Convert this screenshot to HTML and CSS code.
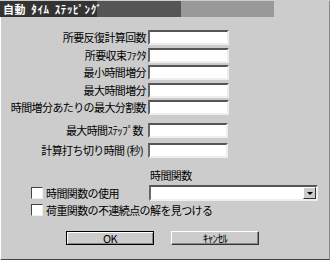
FILE: index.html
```html
<!DOCTYPE html>
<html>
<head>
    <title>自動 ﾀｲﾑ ｽﾃｯﾋﾟﾝｸﾞ</title>
    <link rel="stylesheet" href="styles.css">
</head>
<body>
<div class="window">
    <div class="titlebar"><span class="title">自動 ﾀｲﾑ ｽﾃｯﾋﾟﾝｸﾞ</span></div>

    <div class="fields">
        <label>所要反復計算回数</label><div class="edit"></div>
        <label>所要収束ﾌｧｸﾀ</label><div class="edit"></div>
        <label>最小時間増分</label><div class="edit"></div>
        <label>最大時間増分</label><div class="edit"></div>
        <label>時間増分あたりの最大分割数</label><div class="edit"></div>
    </div>

    <div class="fields fields-lower">
        <label>最大時間ｽﾃｯﾌﾟ数</label><div class="edit"></div>
        <label>計算打ち切り時間 (秒)</label><div class="edit"></div>
    </div>

    <div class="func-head">時間関数</div>
    <div class="func-row">
        <div class="check"><span class="box"></span><span>時間関数の使用</span></div>
        <div class="combo"><span class="drop"><span class="arrow"></span></span></div>
    </div>
    <div class="check check-wide"><span class="box"></span><span>荷重関数の不連続点の解を見つける</span></div>

    <div class="buttons">
        <div class="button default">OK</div>
        <div class="button">ｷｬﾝｾﾙ</div>
    </div>
</div>
</body>
</html>
```

FILE: styles.css
```css
html, body {
    margin:0;
    padding:0;
    background:#cccccc;
    overflow:hidden;
}

.window {
    box-sizing:border-box;
    width:330px;
    height:260px;
    background:#cccccc;
    border-left:1px solid #ffffff;
    border-right:1px solid #888888;
    border-bottom:2px solid #444444;
    font-family: "Noto Sans CJK JP", "Liberation Sans", sans-serif;
    font-size:11px;
    letter-spacing:-0.6px;
    color:#000000;
}

.titlebar {
    margin-top:1px;
    margin-left:-1px;
    width:274px;
    height:16px;
    background:linear-gradient(to right, #333333 0, #333333 97px, #555555 97px, #555555 181px, #999999 181px);
    display:flex;
    align-items:center;
}

.title {
    padding-left:3px;
    color:#ffffff;
    font-weight:bold;
    font-size:11px;
    letter-spacing:0.6px;
    word-spacing:2px;
    line-height:16px;
    white-space:pre;
}

.fields {
    display:grid;
    grid-template-columns:145px 81px;
    grid-auto-rows:15px;
    column-gap:2px;
    row-gap:2.5px;
    margin-top:13px;
}

.fields label {
    text-align:right;
    line-height:15px;
    white-space:nowrap;
}

.fields-lower {
    grid-template-columns:142px 80px;
    column-gap:5px;
    row-gap:5px;
    margin-top:8px;
}

.edit {
    box-sizing:border-box;
    background:#ffffff;
    border-top:2px solid #555555;
    border-left:2px solid #666666;
    border-right:2px solid #eeeeee;
    border-bottom:2px solid #eeeeee;
}

.func-head {
    margin-top:11px;
    padding-left:149px;
    height:14px;
    line-height:12px;
}

.func-row {
    display:flex;
    align-items:center;
    margin-top:2px;
    height:16px;
}

.check {
    display:flex;
    align-items:center;
    gap:3px;
    padding-left:30px;
    width:118px;
    white-space:nowrap;
}

.check-wide {
    width:auto;
    margin-top:2px;
    height:14px;
}

.box {
    box-sizing:border-box;
    width:12px;
    height:12px;
    background:#ffffff;
    border-top:1px solid #444444;
    border-left:1px solid #444444;
    border-right:1px solid #eeeeee;
    border-bottom:1px solid #eeeeee;
}

.combo {
    box-sizing:border-box;
    width:169px;
    height:16px;
    background:#ffffff;
    border-top:2px solid #555555;
    border-left:2px solid #666666;
    border-right:2px solid #eeeeee;
    border-bottom:2px solid #eeeeee;
    display:flex;
    justify-content:flex-end;
}

.drop {
    box-sizing:border-box;
    width:13px;
    height:12px;
    background:#cccccc;
    border-top:1px solid #ffffff;
    border-left:1px solid #ffffff;
    border-right:1px solid #333333;
    border-bottom:1px solid #333333;
    display:flex;
    align-items:center;
    justify-content:center;
}

.arrow {
    width:0;
    height:0;
    border-left:3px solid transparent;
    border-right:3px solid transparent;
    border-top:3px solid #000000;
}

.buttons {
    display:flex;
    gap:17px;
    padding-left:65px;
    margin-top:14px;
}

.button {
    box-sizing:border-box;
    width:88px;
    height:14px;
    background:#cccccc;
    border-top:1px solid #ffffff;
    border-left:1px solid #ffffff;
    border-right:1px solid #333333;
    border-bottom:1px solid #333333;
    box-shadow:inset -1px -1px 0 #888888;
    text-align:center;
    line-height:12px;
}

.button.default {
    border:1px solid #000000;
    box-shadow:inset 1px 1px 0 #ffffff, inset -1px -1px 0 #888888;
}
```
